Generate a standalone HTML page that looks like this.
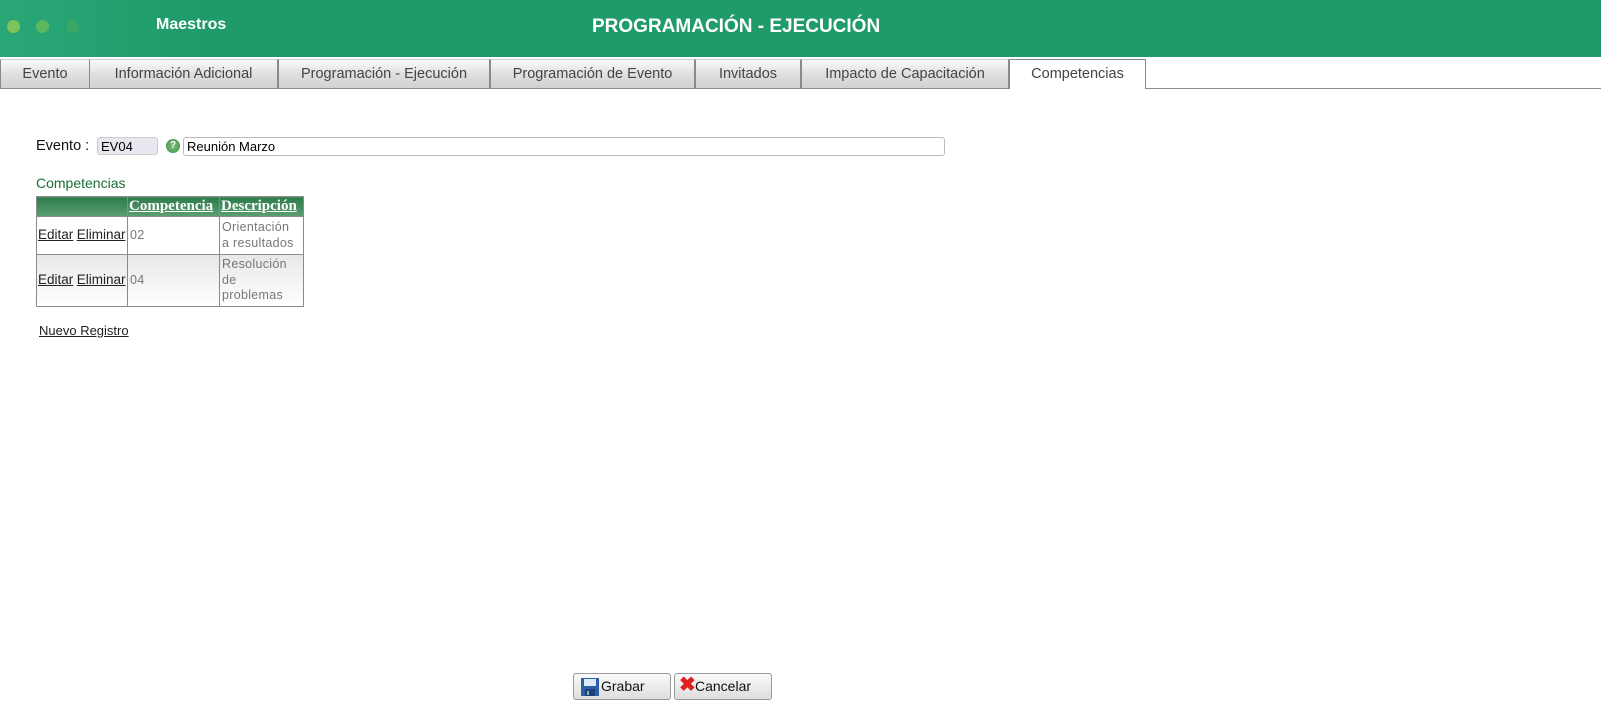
<!DOCTYPE html>
<html><head><meta charset="utf-8"><style>
*{margin:0;padding:0;box-sizing:border-box}
body{width:1601px;height:725px;background:#fff;font-family:"Liberation Sans",sans-serif;position:relative;overflow:hidden}
.hdr{position:absolute;left:0;top:0;width:1601px;height:57px;background:linear-gradient(90deg,#2aa777 0,#1e9b69 200px,#1e9b69 100%)}
.dot{position:absolute;top:20px;width:13px;height:13px;border-radius:50%}
.a{position:absolute}
.tab{position:absolute;top:59px;height:30px;border:1px solid #8a8a8a;border-top:1px solid #ccc;background:linear-gradient(#fafafa,#e0e0e0 50%,#d2d2d2);font-size:14.5px;color:#444;text-align:center;line-height:28px}
table{border-collapse:collapse;position:absolute;left:36px;top:196px;font-size:12px;table-layout:fixed;width:267px}
td,th{border:1px solid #8a8a8a;padding:0 2px;overflow:hidden}
th{background:linear-gradient(#2f7a4d,#5aa070);color:#fff;height:20px;font-size:15px;font-family:"Liberation Serif",serif;font-weight:bold;text-decoration:underline;text-align:left;white-space:nowrap;padding:0 1px}
td{color:#777;line-height:15.5px;font-size:12.5px;letter-spacing:0.3px;white-space:nowrap}
td.l{letter-spacing:0;padding:0 1px}
td u{color:#222;font-size:13.5px}
.btn{position:absolute;top:673px;height:27px;border:1px solid #999;border-radius:3px;background:linear-gradient(#fafafa,#ddd);font-size:14px;color:#111;line-height:25px}
</style></head><body>
<div class="hdr">
<div class="dot" style="left:7px;background:#7cc35a"></div>
<div class="dot" style="left:36px;background:#5fb660"></div>
<div class="dot" style="left:66px;background:#3aa766"></div>
<div class="a" style="left:156px;top:16px;color:#fff;font-weight:bold;font-size:16px">Maestros</div>
<div class="a" style="left:592px;top:16px;color:#fff;font-weight:bold;font-size:19px">PROGRAMACIÓN - EJECUCIÓN</div>
</div>
<div class="a" style="left:1145px;top:88px;width:456px;height:1px;background:#8a8a8a"></div>
<div class="tab" style="left:0;width:90px">Evento</div>
<div class="tab" style="left:89px;width:189px">Información Adicional</div>
<div class="tab" style="left:278px;width:212px">Programación - Ejecución</div>
<div class="tab" style="left:490px;width:205px">Programación de Evento</div>
<div class="tab" style="left:695px;width:106px">Invitados</div>
<div class="tab" style="left:801px;width:208px">Impacto de Capacitación</div>
<div class="tab" style="left:1009px;width:137px;background:#fff;border-bottom:none;border-top:1px solid #8a8a8a">Competencias</div>
<div class="a" style="left:36px;top:138px;font-size:14.5px;color:#111">Evento :</div>
<div class="a" style="left:97px;top:137px;width:61px;height:18px;border:1px solid #ccc;border-radius:3px;background:#e8e9f0;font-size:13px;padding-left:3px;line-height:17px">EV04</div>
<div class="a" style="left:166px;top:139px;width:14px;height:14px;border-radius:50%;background:radial-gradient(#7cc07a,#3e8e4a);color:#fff;font-size:10px;font-weight:bold;text-align:center;line-height:14px">?</div>
<div class="a" style="left:183px;top:137px;width:762px;height:19px;border:1px solid #bbb;border-radius:3px;font-size:13px;padding-left:3px;line-height:18px">Reunión Marzo</div>
<div class="a" style="left:36px;top:175px;font-size:14px;color:#1a6e35">Competencias</div>
<table>
<colgroup><col style="width:91px"><col style="width:92px"><col style="width:84px"></colgroup>
<tr><th></th><th>Competencia</th><th>Descripción</th></tr>
<tr style="height:38px"><td class="l"><u>Editar</u> <u>Eliminar</u></td><td>02</td><td>Orientación<br>a resultados</td></tr>
<tr style="height:52px;background:linear-gradient(#e8e8e8,#fff)"><td class="l"><u>Editar</u> <u>Eliminar</u></td><td>04</td><td>Resolución<br>de<br>problemas</td></tr>
</table>
<div class="a" style="left:39px;top:323px;font-size:13px;color:#222;text-decoration:underline">Nuevo Registro</div>
<div class="btn" style="left:573px;width:98px"><svg style="position:absolute;left:6px;top:3px" width="20" height="20" viewBox="0 0 20 20"><rect x="1" y="1" width="18" height="18" fill="#2b5fa8"/><rect x="4" y="2" width="12" height="7" fill="#dfe8f5"/><rect x="5" y="12" width="10" height="7" fill="#1c3f78"/><rect x="7" y="14" width="2" height="4" fill="#9ab"/></svg><span style="position:absolute;left:27px">Grabar</span></div>
<div class="btn" style="left:674px;width:98px"><span style="position:absolute;left:4px;top:0;color:#e02020;font-weight:bold;font-size:20px;line-height:22px">✖</span><span style="position:absolute;left:20px">Cancelar</span></div>
</body></html>
